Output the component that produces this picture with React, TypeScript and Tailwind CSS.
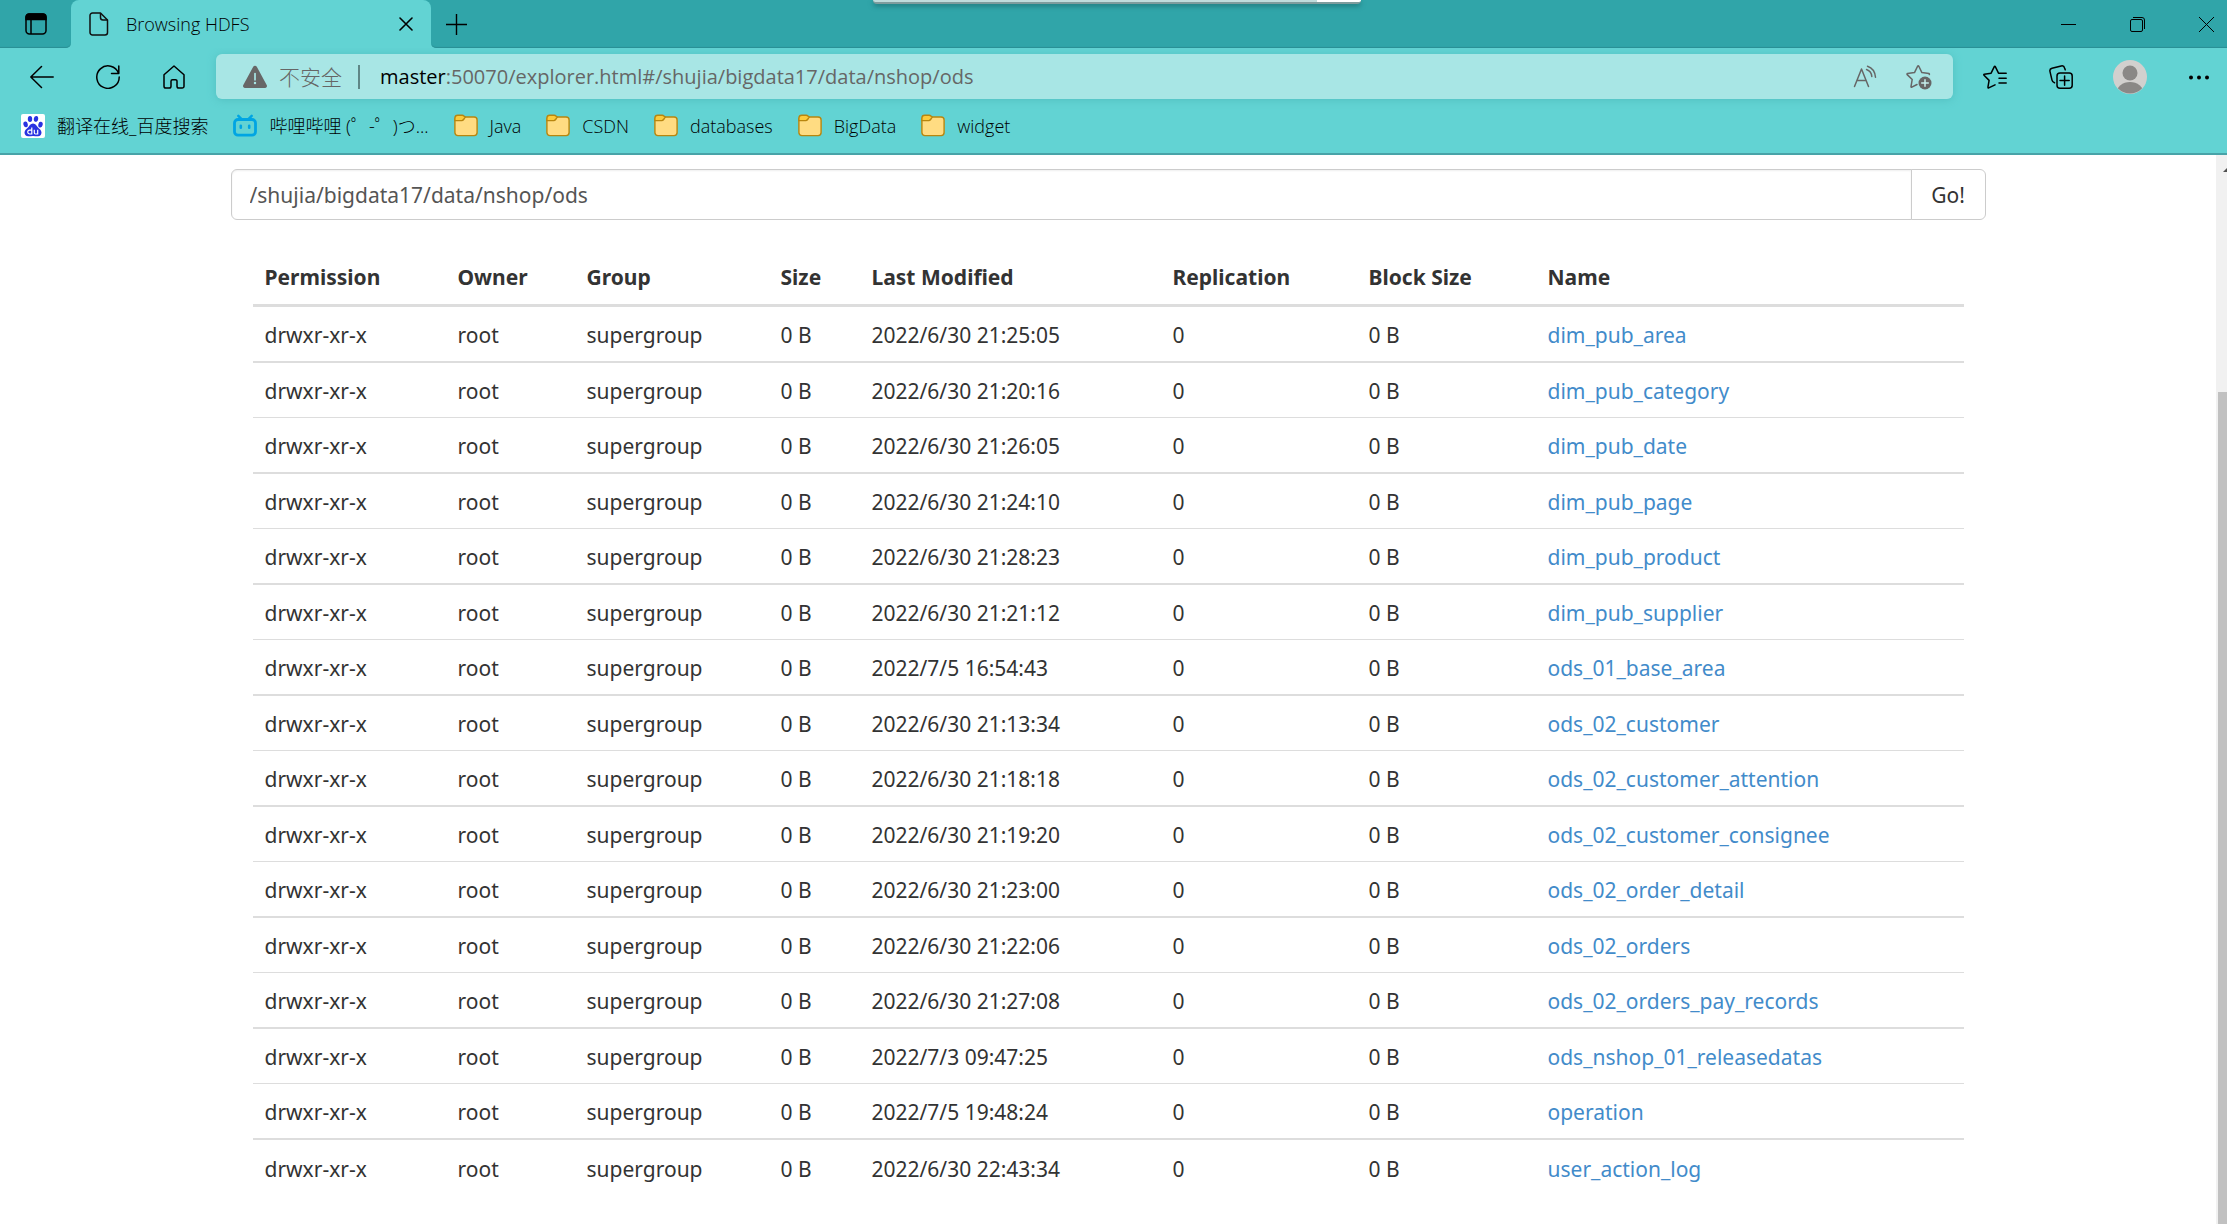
import React from "react";

const files: [string, string][] = [
  ["2022/6/30 21:25:05", "dim_pub_area"],
  ["2022/6/30 21:20:16", "dim_pub_category"],
  ["2022/6/30 21:26:05", "dim_pub_date"],
  ["2022/6/30 21:24:10", "dim_pub_page"],
  ["2022/6/30 21:28:23", "dim_pub_product"],
  ["2022/6/30 21:21:12", "dim_pub_supplier"],
  ["2022/7/5 16:54:43", "ods_01_base_area"],
  ["2022/6/30 21:13:34", "ods_02_customer"],
  ["2022/6/30 21:18:18", "ods_02_customer_attention"],
  ["2022/6/30 21:19:20", "ods_02_customer_consignee"],
  ["2022/6/30 21:23:00", "ods_02_order_detail"],
  ["2022/6/30 21:22:06", "ods_02_orders"],
  ["2022/6/30 21:27:08", "ods_02_orders_pay_records"],
  ["2022/7/3 09:47:25", "ods_nshop_01_releasedatas"],
  ["2022/7/5 19:48:24", "operation"],
  ["2022/6/30 22:43:34", "user_action_log"],
];

const columns = ["Permission", "Owner", "Group", "Size", "Last Modified", "Replication", "Block Size", "Name"];

function Folder() {
  return (
    <svg className="size-6 shrink-0" viewBox="0 0 24 24" fill="none" stroke="#b8860f" strokeWidth="1.4">
      <rect x="0.9" y="3" width="22.2" height="18.6" rx="3" fill="#ffdc82" />
      <path d="M.9 6.6V4A2.9 2.9 0 0 1 3.8 1.2h4.4c.7 0 1.300.3 1.700.7l1.300 1.300-1.600 2.300c-.5.7-1.100 1.100-1.900 1.100z" fill="#fccb3a" />
    </svg>
  );
}

function Baidu() {
  return (
    <svg className="size-6 shrink-0" viewBox="0 0 24 24">
      <rect width="24" height="24" rx="2" fill="#fff" />
      <g fill="#2932e1">
        <ellipse cx="4.600" cy="10.400" rx="2.200" ry="2.900" transform="rotate(-12 4.600 10.400)" />
        <ellipse cx="9" cy="4.900" rx="2.200" ry="3" />
        <ellipse cx="15" cy="4.900" rx="2.200" ry="3" transform="rotate(8 15 4.900)" />
        <ellipse cx="19.500" cy="10.600" rx="2.200" ry="2.900" transform="rotate(12 19.500 10.600)" />
        <path d="M12 9.500c-2.600 0-3.400 2.300-4.800 3.800-1.500 1.600-3.700 2.800-3.700 5.300 0 2.200 1.600 3.700 3.600 3.700 1.800 0 3.200-.4 4.900-.4s3.200.4 5 .4c2.100 0 3.500-1.500 3.500-3.700 0-2.500-2.200-3.700-3.700-5.300-1.400-1.500-2.200-3.800-4.800-3.800z" />
      </g>
      <g fill="none" stroke="#fff" strokeWidth="1.200">
        <path d="M10.800 13.400v6.600H8.700a1.900 1.900 0 0 1 0-3.900h2.100M13.300 15.800v3c0 .8.4 1.200 1.100 1.200h2.300v-4.200" />
      </g>
    </svg>
  );
}

function Bilibili() {
  return (
    <svg className="size-6 shrink-0" viewBox="0 0 24 24" fill="none" stroke="#00a5e3" strokeLinecap="round">
      <rect x="1.500" y="5.500" width="21" height="15.700" rx="3.500" strokeWidth="2.800" />
      <path d="M5.300 1.800l3 3M18.700 1.800l-3 3" strokeWidth="2.500" />
      <path d="M7.800 11.800v2M16.200 11.800v2" strokeWidth="2.600" />
    </svg>
  );
}

const bookmarks: [React.ReactNode, string][] = [
  [<Baidu />, "翻译在线_百度搜索"],
  [<Bilibili />, "哔哩哔哩 (゜-゜)つ..."],
  [<Folder />, "Java"],
  [<Folder />, "CSDN"],
  [<Folder />, "databases"],
  [<Folder />, "BigData"],
  [<Folder />, "widget"],
];

function TabStrip() {
  return (
    <div className="relative flex h-12 bg-[#62d3d3]">
      <div className="flex w-[71px] items-center rounded-br-[5px] bg-[#30a5a9] pl-[25px] shadow-[inset_0_-2px_1px_-1px_#2a8f94]">
        <button aria-label="Tab actions" className="size-[22px]">
          <svg className="size-[22px]" viewBox="0 0 22 22" fill="none" stroke="#000" strokeWidth="1.5">
            <rect x="1" y="1" width="20" height="20" rx="3.500" />
            <path d="M1 6.500V4a3 3 0 0 1 3-3h14a3 3 0 0 1 3 3v2.500z" fill="#000" />
            <path d="M6 6v15" />
          </svg>
        </button>
      </div>
      <div className="w-[360px] bg-[#30a5a9]">
        <div className="flex h-12 items-center rounded-t-[8px] bg-[#62d3d3] pr-[18px] pl-[18px]">
          <svg className="h-6 w-5 shrink-0" viewBox="0 0 20 24" fill="none" stroke="#111" strokeWidth="1.500" strokeLinejoin="round">
            <path d="M3.500 1h8l7 7v12.500a2.500 2.500 0 0 1-2.500 2.500H3.500A2.500 2.500 0 0 1 1 20.500v-17A2.500 2.500 0 0 1 3.500 1z" />
            <path d="M11.500 1v4.500A2.500 2.500 0 0 0 14 8h4.500" />
          </svg>
          <span className="ml-[17px] flex-1 text-[18px] leading-6 font-light text-black">Browsing HDFS</span>
          <button aria-label="Close tab">
            <svg className="size-[14px]" viewBox="0 0 14 14" stroke="#000" strokeWidth="1.600" strokeLinecap="round">
              <path d="M1 1l12 12M13 1L1 13" />
            </svg>
          </button>
        </div>
      </div>
      <div className="flex flex-1 items-center rounded-bl-[5px] bg-[#30a5a9] pr-[13px] pl-[15px] shadow-[inset_0_-2px_1px_-1px_#2a8f94]">
        <button aria-label="New tab">
          <svg className="size-[21px]" viewBox="0 0 21 21" stroke="#000" strokeWidth="1.400">
            <path d="M10.500 0v21M0 10.500h21" />
          </svg>
        </button>
        <div className="ml-auto flex items-center gap-[54px]">
          <button aria-label="Minimize">
            <svg className="size-[15px]" viewBox="0 0 15 15" stroke="#000"><path d="M0 7.500h15" /></svg>
          </button>
          <button aria-label="Restore">
            <svg className="size-[15px]" viewBox="0 0 15 15" fill="none" stroke="#000">
              <rect x=".5" y="2.500" width="12" height="12" rx="1.500" />
              <path d="M3 .5h9a2.500 2.500 0 0 1 2.500 2.500v9" />
            </svg>
          </button>
          <button aria-label="Close window">
            <svg className="size-[15px]" viewBox="0 0 15 15" stroke="#000"><path d="M0 0l15 15M15 0L0 15" /></svg>
          </button>
        </div>
      </div>
      <div className="absolute top-0 left-[873px] flex h-1 w-[488px] overflow-hidden rounded-b-[4px] border-b-2 border-[#7f9c9d] bg-[#bfdcdc] shadow-[0_2px_5px_#1f7478]">
        <span className="ml-auto w-[44px] bg-white" />
      </div>
    </div>
  );
}

function Toolbar() {
  return (
    <div className="flex h-[57px] items-center pr-[18px] pl-[30px]">
      <nav className="flex items-center gap-[42px]">
        <button aria-label="Back">
          <svg className="size-6" viewBox="0 0 24 24" fill="none" stroke="#000" strokeWidth="1.500" strokeLinecap="round" strokeLinejoin="round">
            <path d="M23.200 12H.8M11.500 1.500L.8 12l10.700 10.500" />
          </svg>
        </button>
        <button aria-label="Refresh">
          <svg className="size-6" viewBox="0 0 24 24" fill="none" stroke="#000" strokeWidth="1.500" strokeLinecap="round" strokeLinejoin="round">
            <path d="M22.600 8.500A11.200 11.200 0 1 0 23.200 12M22.800 1v7.500h-7.300" />
          </svg>
        </button>
        <button aria-label="Home">
          <svg className="size-6" viewBox="0 0 24 24" fill="none" stroke="#000" strokeWidth="1.500" strokeLinejoin="round">
            <path d="M2 9.800L12 1l10 8.800v11.400a1.800 1.800 0 0 1-1.800 1.800h-3.400a1.800 1.800 0 0 1-1.800-1.800v-5a1.500 1.500 0 0 0-1.500-1.500h-3A1.500 1.500 0 0 0 9 16.200v5A1.800 1.800 0 0 1 7.200 23H3.800A1.800 1.800 0 0 1 2 21.200z" />
          </svg>
        </button>
      </nav>
      <div className="ml-[30px] flex h-[45px] flex-1 items-center rounded-[6px] bg-[#a8e6e5] pr-[21px] pl-[27px] text-[20px] leading-7 text-[#666] shadow-[0_1px_8px_#52bfc0]">
        <svg className="size-6 shrink-0" viewBox="0 0 24 24">
          <path d="M10.200 1.700a2.100 2.100 0 0 1 3.600 0l9.900 18.200a2 2 0 0 1-1.800 3H2.100a2 2 0 0 1-1.800-3z" fill="#676767" />
          <path d="M12 8.500v6.300" stroke="#a8e6e5" strokeWidth="1.700" strokeLinecap="round" />
          <circle cx="12" cy="18" r="1.200" fill="#a8e6e5" />
        </svg>
        <span className="ml-3 text-[21px] font-light">不安全</span>
        <span className="mr-[20px] ml-[16px] h-6 w-[2px] bg-[#5f8787]" />
        <span className="flex-1 whitespace-nowrap">
          <span className="text-black">master</span>:50070/explorer.html#/shujia/bigdata17/data/nshop/ods
        </span>
        <div className="flex items-center gap-[29px]">
          <button aria-label="Read aloud">
            <svg className="size-6" viewBox="0 0 24 24" fill="none" stroke="#666" strokeWidth="1.500" strokeLinecap="round" strokeLinejoin="round">
              <path d="M1.500 21.500L8.500 4l7 17.500M4 15.500h9M14.500 1.200c4.500 1.500 7.500 5.500 8 11M13.500 4.500c3 1 5 3.500 5.300 7" />
            </svg>
          </button>
          <button aria-label="Add to favorites">
            <svg className="size-[26px]" viewBox="0 0 26 26" fill="none" stroke="#666" strokeWidth="1.500" strokeLinecap="round" strokeLinejoin="round">
              <path d="M11 20.500l-5.200 2.700c-.5.2-.9-.1-.8-.6l1.200-7.100-5-4.900c-.4-.4-.2-.9.3-1l7-1L11.700 2c.2-.4.8-.4 1 0l3.200 6.600 7 1c.5.1.7.6.4.9" />
              <circle cx="19" cy="19" r="6.500" fill="#666" stroke="none" />
              <path d="M19 15.700v6.600M15.700 19h6.600" stroke="#c6eeed" />
            </svg>
          </button>
        </div>
      </div>
      <button aria-label="Favorites" className="ml-[30px]">
        <svg className="size-6" viewBox="0 0 24 24" fill="none" stroke="#000" strokeWidth="1.500" strokeLinecap="round" strokeLinejoin="round">
          <path d="M12 19.800l-6.300 3.100c-.5.300-.9 0-.8-.5l1.200-7L1 10.200c-.4-.4-.2-.9.300-1l6.800-1 3.200-6.600c.2-.4.800-.4 1 0l3.200 6.600h7.700M16 13.200h7.200M16 18h7.200" />
        </svg>
      </button>
      <button aria-label="Collections" className="ml-[42px]">
        <svg className="size-6" viewBox="0 0 24 24" fill="none" stroke="#000" strokeWidth="1.500" strokeLinecap="round" strokeLinejoin="round">
          <rect x="8" y="8" width="15.200" height="15.200" rx="3" />
          <path d="M15.600 11v9.200M11 15.600h9.200M16.200 4.800L15.600 3A2.800 2.800 0 0 0 12.200 1L3 3.200A2.800 2.800 0 0 0 1 6.600l2 8.500a3.500 3.500 0 0 0 2.500 2.600" />
        </svg>
      </button>
      <button aria-label="Profile" className="ml-[40px]">
        <svg className="size-[34px]" viewBox="0 0 34 34">
          <clipPath id="avatar"><circle cx="17" cy="17" r="16.500" /></clipPath>
          <circle cx="17" cy="17" r="17" fill="#d2d0ce" />
          <g fill="#8a8886" clipPath="url(#avatar)">
            <circle cx="17" cy="13" r="7.500" />
            <ellipse cx="17" cy="33" rx="13.500" ry="11" />
          </g>
        </svg>
      </button>
      <button aria-label="Settings and more" className="ml-[42px]">
        <svg className="h-6 w-5" viewBox="0 0 20 24">
          <circle cx="2" cy="12.500" r="2" /><circle cx="10" cy="12.500" r="2" /><circle cx="18" cy="12.500" r="2" />
        </svg>
      </button>
    </div>
  );
}

export default function App() {
  return (
    <div className="flex min-h-screen flex-col bg-white font-['Open_Sans','Noto_Sans_CJK_SC',sans-serif]">
      <header className="border-b-2 border-[#48a3a8] bg-[#62d3d3]">
        <TabStrip />
        <Toolbar />
        <nav className="flex h-12 items-center gap-[25px] pb-[6px] pl-[21px]">
          {bookmarks.map(([icon, label]) => (
            <a key={label} href="#" className="flex items-center gap-3 text-[18px] leading-6 font-light whitespace-nowrap text-black">
              {icon}
              {label}
            </a>
          ))}
        </nav>
      </header>
      <div className="flex flex-1">
        <main className="flex-1">
          <div className="mx-auto max-w-[1755px] pt-[14px] font-['Noto_Sans',sans-serif] text-[21px] leading-[30px] text-[#333]">
            <form className="flex h-[51px]" onSubmit={(e) => e.preventDefault()}>
              <input
                aria-label="Directory"
                defaultValue="/shujia/bigdata17/data/nshop/ods"
                className="min-w-0 flex-1 rounded-l-[6px] border border-[#ccc] px-[18px] text-[#555] shadow-[inset_0_1px_2px_#0001] outline-none"
              />
              <button className="-ml-px w-[75px] rounded-r-[6px] border border-[#ccc] bg-white">Go!</button>
            </form>
            <div className="px-[22px] pt-[30px]">
              <table className="w-full table-fixed border-separate border-spacing-0 text-left">
                <colgroup>
                  <col className="w-[193px]" />
                  <col className="w-[129px]" />
                  <col className="w-[194px]" />
                  <col className="w-[91px]" />
                  <col className="w-[301px]" />
                  <col className="w-[196px]" />
                  <col className="w-[179px]" />
                  <col />
                </colgroup>
                <thead>
                  <tr>
                    {columns.map((c) => (
                      <th key={c} className="h-[57px] border-b-3 border-[#ddd] px-3 font-bold">{c}</th>
                    ))}
                  </tr>
                </thead>
                <tbody className="[&>tr:last-child>td]:border-b-0! [&>tr:nth-child(even)>td]:h-[55px] [&>tr:nth-child(even)>td]:border-b [&>tr:nth-child(odd)>td]:h-[56px] [&>tr:nth-child(odd)>td]:border-b-2 [&>tr>td]:border-[#ddd] [&>tr>td]:px-3 [&>tr>td]:pt-[2px]">
                  {files.map(([modified, name]) => (
                    <tr key={name}>
                      <td>drwxr-xr-x</td>
                      <td>root</td>
                      <td>supergroup</td>
                      <td>0 B</td>
                      <td>{modified}</td>
                      <td>0</td>
                      <td>0 B</td>
                      <td><a href="#" className="text-[#428bca]">{name}</a></td>
                    </tr>
                  ))}
                </tbody>
              </table>
            </div>
          </div>
        </main>
        <div className="flex w-[11px] flex-col overflow-hidden bg-[#f1f1f1] pt-3 pl-[2px]">
          <svg className="ml-[5px] h-[5px] w-[10px] shrink-0" viewBox="0 0 10 5" fill="#505050"><path d="M5 0l5 5H0z" /></svg>
          <div className="mt-[220px] flex-1 bg-[#c1c1c1]" />
        </div>
      </div>
    </div>
  );
}
